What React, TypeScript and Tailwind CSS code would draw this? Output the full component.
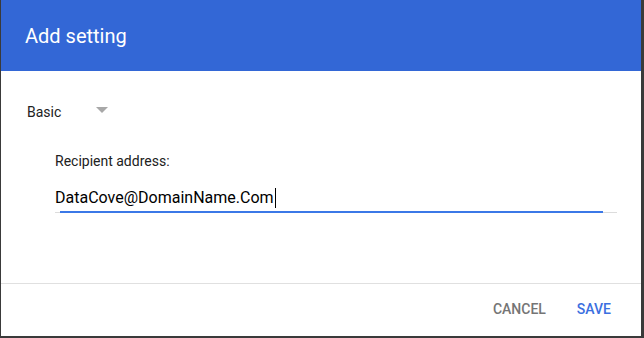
export default function App() {
  return (
    <div className="w-[644px] h-[338px] bg-[#3a3a3a] overflow-hidden" style={{ fontFamily: 'Roboto, "Liberation Sans", sans-serif' }}>
      <div className="ml-px w-[640px] h-[336px] bg-white flex flex-col">
        {/* header */}
        <div className="h-[71px] bg-[#3367d6] flex items-center px-[24px]">
          <h1 className="text-[20px] text-white font-normal">Add setting</h1>
        </div>

        {/* body */}
        <div className="flex-1 pt-[32px] px-[26px]">
          <div className="flex items-center h-[18px]">
            <span className="text-[14px] text-[#212121]">Basic</span>
            <svg className="ml-[35px] -mt-[5px]" width="12" height="6" viewBox="0 0 12 6">
              <path d="M0 0 L12 0 L6 6 Z" fill="#a8a8a8" />
            </svg>
          </div>
          <div className="pl-[28px] pt-[31px]">
            <div className="text-[14px] text-[#212121] leading-[18px]">Recipient address:</div>
            <div className="mt-[17px] w-[562px]">
              <div className="text-[16px] text-black leading-[22px] flex items-center">
                DataCove@DomainName.Com
                <span className="inline-block w-px h-[20px] bg-black ml-px" />
              </div>
              <div className="relative mt-[3px] h-px bg-[#dcdcdc]">
                <div className="absolute left-[5px] right-[14px] -top-px h-[2px] bg-[#3b78e7]" />
              </div>
            </div>
          </div>
        </div>

        {/* footer */}
        <div className="h-[53px] border-t border-[#e0e0e0] flex items-center justify-end gap-[31px] pr-[30px] pb-[2px]">
          <button className="text-[14px] font-medium text-[#757575]">CANCEL</button>
          <button className="text-[14px] font-medium text-[#3b6fe0]">SAVE</button>
        </div>
      </div>
    </div>
  );
}
